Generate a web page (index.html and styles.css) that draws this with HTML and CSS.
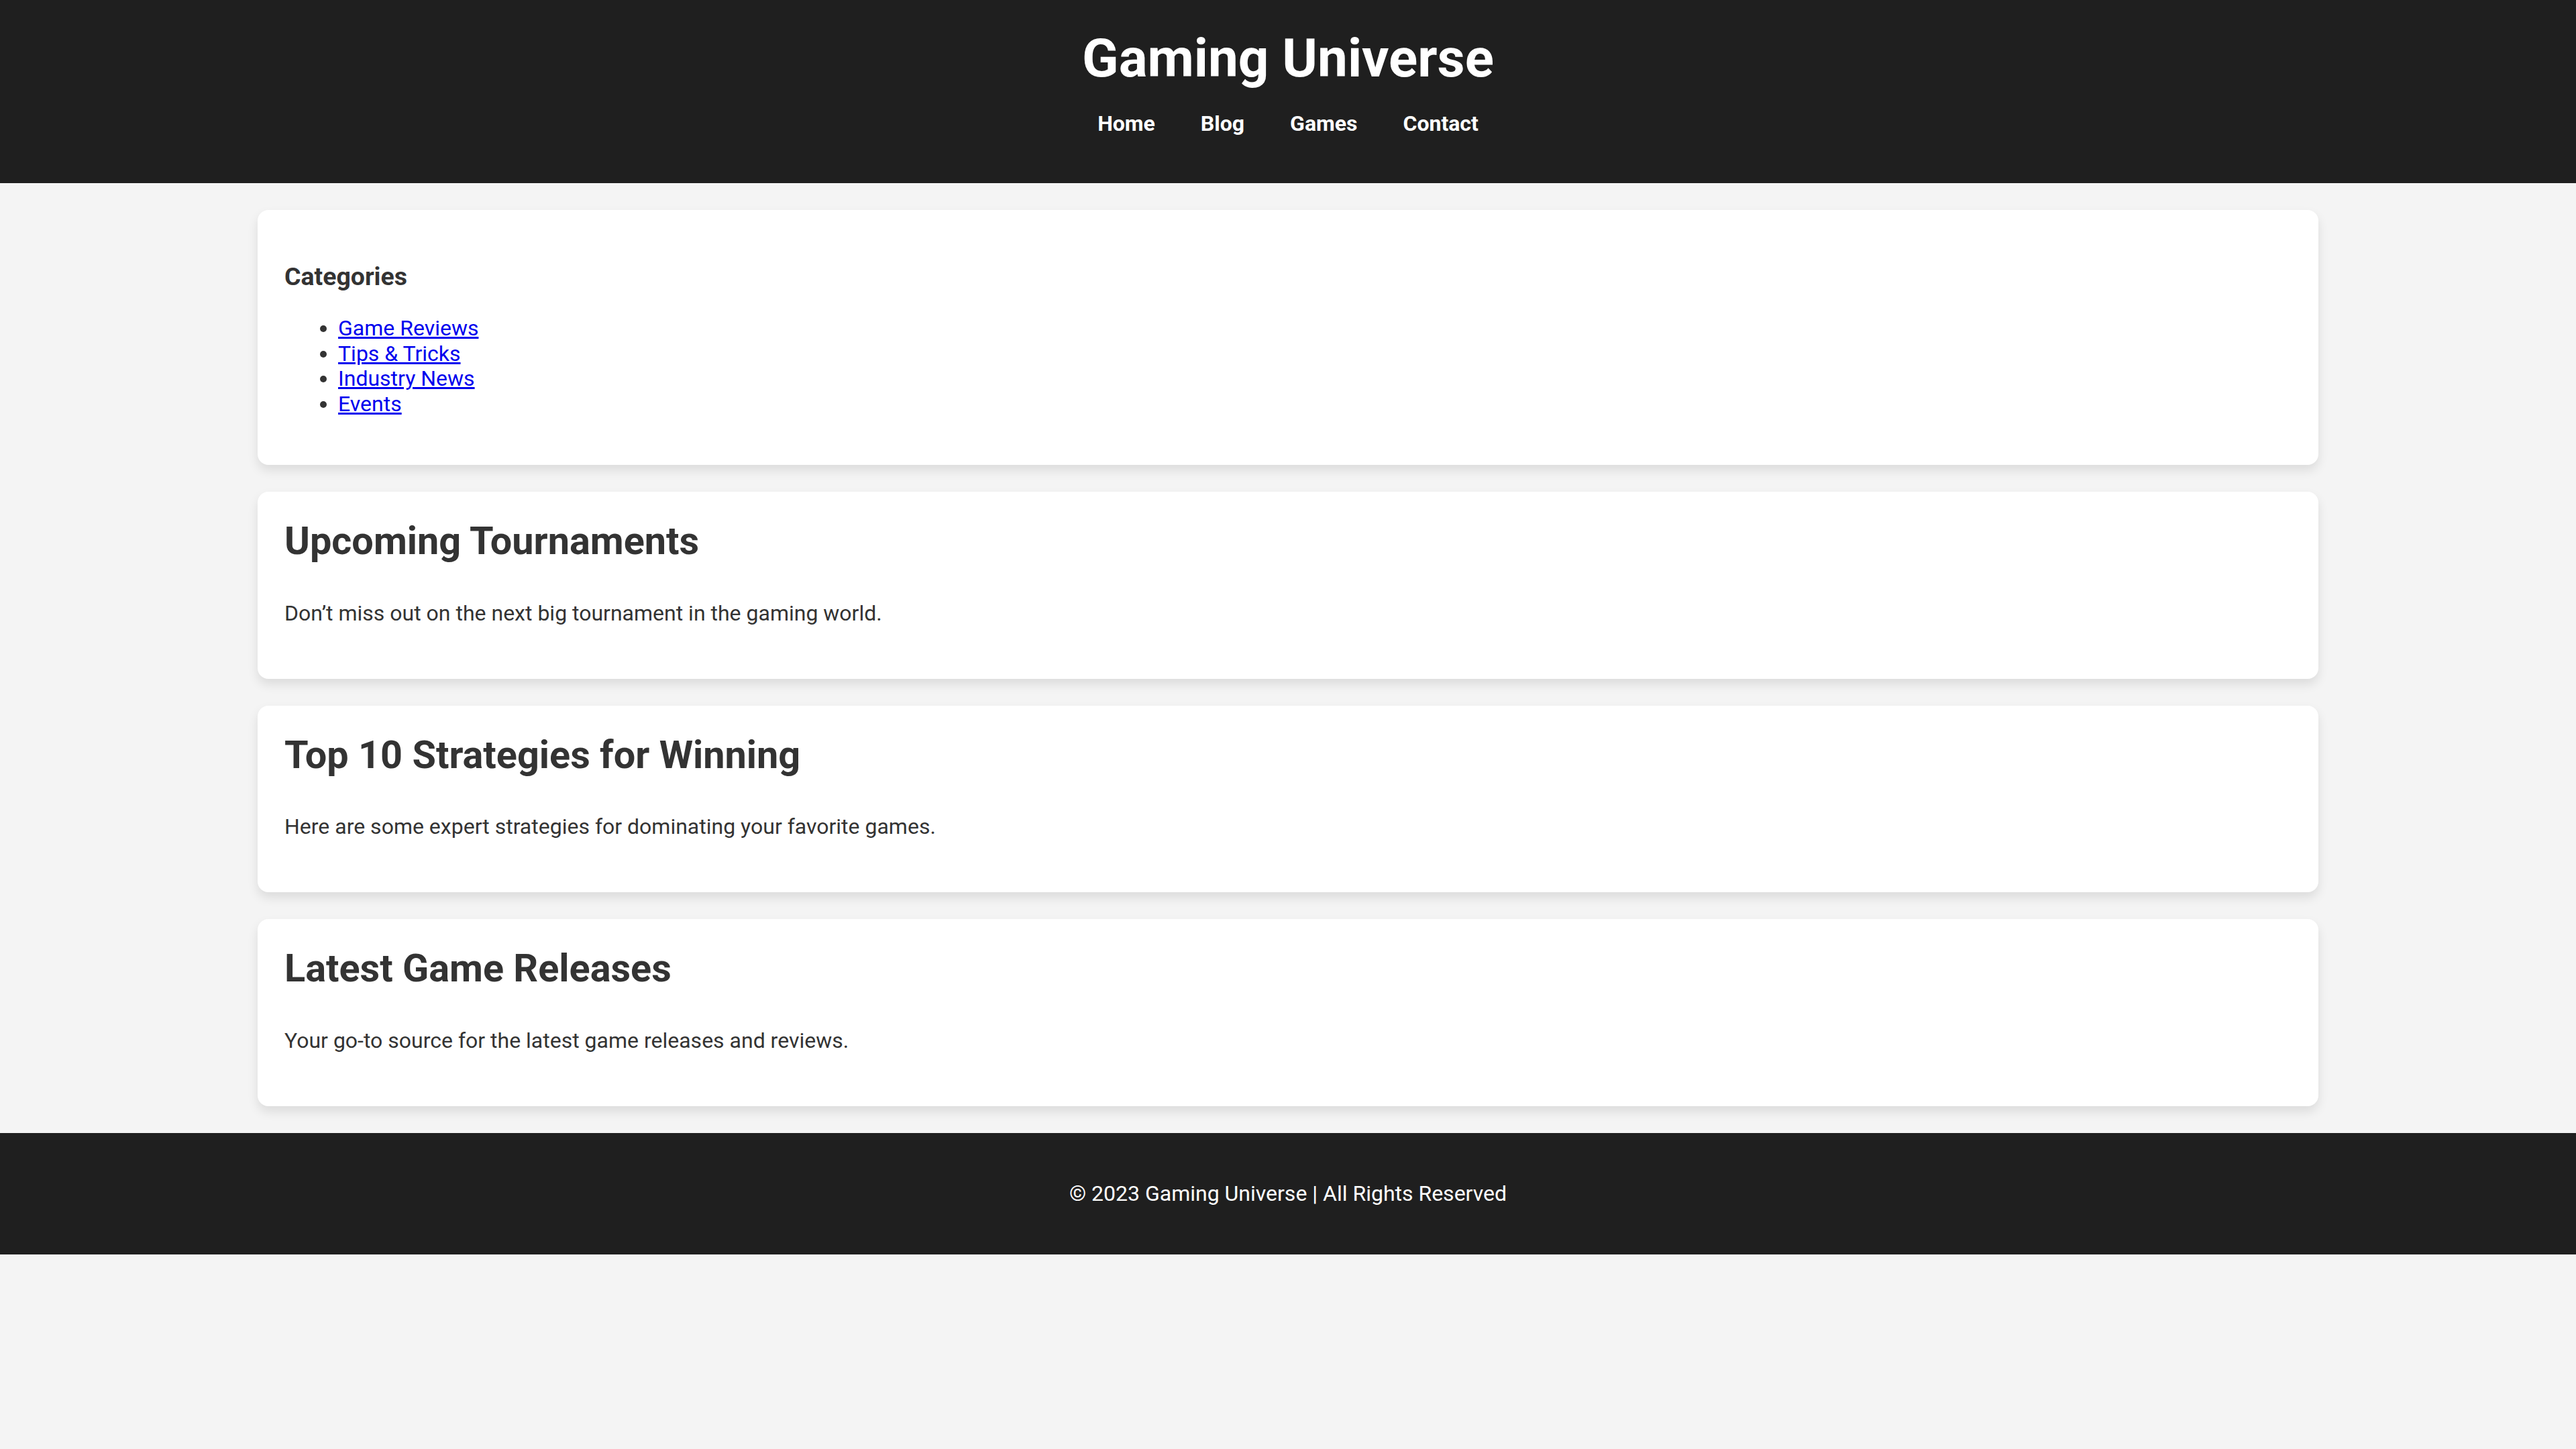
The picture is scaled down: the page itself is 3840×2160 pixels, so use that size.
FILE: index.html
```html
<!DOCTYPE html>
<html lang="en">
<head>
<meta charset="utf-8">
<title>Gaming Universe</title>
<link rel="stylesheet" href="styles.css">
</head>
<body>
<header class="site-header">
  <h1 class="site-title">Gaming Universe</h1>
  <nav class="site-nav">
    <a href="#">Home</a>
    <a href="#">Blog</a>
    <a href="#">Games</a>
    <a href="#">Contact</a>
  </nav>
</header>
<main class="content">
  <aside class="card categories">
    <h3 class="cat-title">Categories</h3>
    <ul class="cat-list">
      <li><a href="#">Game Reviews</a></li>
      <li><a href="#">Tips &amp; Tricks</a></li>
      <li><a href="#">Industry News</a></li>
      <li><a href="#">Events</a></li>
    </ul>
  </aside>
  <article class="card post">
    <h2 class="post-title">Upcoming Tournaments</h2>
    <p class="post-text">Don’t miss out on the next big tournament in the gaming world.</p>
  </article>
  <article class="card post">
    <h2 class="post-title">Top 10 Strategies for Winning</h2>
    <p class="post-text">Here are some expert strategies for dominating your favorite games.</p>
  </article>
  <article class="card post">
    <h2 class="post-title">Latest Game Releases</h2>
    <p class="post-text">Your go-to source for the latest game releases and reviews.</p>
  </article>
</main>
<footer class="site-footer">
  <p class="footer-text">© 2023 Gaming Universe | All Rights Reserved</p>
</footer>
</body>
</html>
```

FILE: styles.css
```css
html, body {
  margin: 0;
  padding: 0;
}

body {
  background: #f4f4f4;
  color: #333333;
  font-family: Roboto, "Liberation Sans", Arial, sans-serif;
  font-size: 32px;
}

.site-header {
  background: #1f1f1f;
  color: #ffffff;
  text-align: center;
  padding: 40px 0 49px;
}

.site-title {
  margin: 0 0 12px;
  font-size: 80px;
  font-weight: 700;
  line-height: 94px;
}

.site-nav {
  display: flex;
  justify-content: center;
  gap: 68px;
}

.site-nav a {
  display: inline-block;
  padding: 20px 0;
  color: #ffffff;
  font-weight: 700;
  text-decoration: none;
  line-height: 37.5px;
}

.content {
  width: 80%;
  margin: 0 auto;
  padding: 40px 0;
  display: flex;
  flex-direction: column;
  gap: 40px;
}

.card {
  background: #ffffff;
  border-radius: 16px;
  box-shadow: 0 8px 16px rgba(0, 0, 0, 0.1);
  padding: 40px;
}

.cat-title {
  margin: 37.44px 0;
  font-size: 37.44px;
  font-weight: 700;
  line-height: 44px;
}

.cat-list {
  margin: 0 0 32px;
  padding-left: 80px;
  line-height: 37.5px;
}

.cat-list a {
  color: #0000ee;
}

.post-title {
  margin: 0 0 47.8px;
  font-size: 57.6px;
  font-weight: 700;
  line-height: 67.5px;
}

.post-text {
  margin: 0 0 32px;
  line-height: 51.2px;
}

.site-footer {
  background: #1f1f1f;
  color: #ffffff;
  text-align: center;
  padding: 40px 0;
}

.footer-text {
  margin: 32px 0;
  line-height: 37.5px;
}
```
